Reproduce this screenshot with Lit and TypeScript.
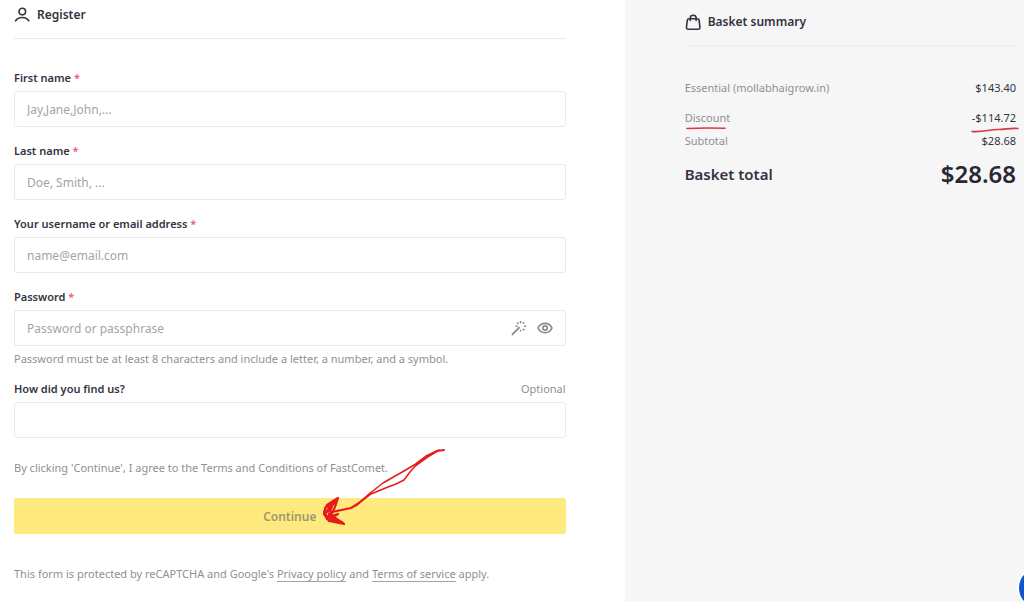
import { LitElement, html, css, svg, nothing } from "lit";
import { customElement, state } from "lit/decorators.js";

interface Field {
  id: string;
  label: string;
  type: string;
  placeholder: string;
}

interface BasketRow {
  label: string;
  amount: string;
  marked?: boolean;
}

const FIELDS: Field[] = [
  { id: "first-name", label: "First name", type: "text", placeholder: "Jay,Jane,John,..." },
  { id: "last-name", label: "Last name", type: "text", placeholder: "Doe, Smith, ..." },
  { id: "email", label: "Your username or email address", type: "email", placeholder: "name@email.com" },
];

const ROWS: BasketRow[] = [
  { label: "Discount", amount: "-$114.72", marked: true },
  { label: "Subtotal", amount: "$28.68" },
];

const userIcon = html`<svg class="icon" viewBox="0 0 16 16" aria-hidden="true">
  ${svg`<circle cx="8.3" cy="4.6" r="3.3"/><path d="M1.6 13.800C3 11.600 5.300 10.500 8.200 10.500s5.300 1.100 6.600 3.300"/>`}
</svg>`;

const bagIcon = html`<svg class="icon" viewBox="0 0 16 16" aria-hidden="true">
  ${svg`<path d="M4 4.800H12.400Q13.900 4.800 14.100 6.300L14.900 13Q15.100 15.200 13 15.200H3.400Q1.300 15.200 1.500 13L2.300 6.300Q2.500 4.800 4 4.800Z"/><path d="M5.300 6.500V3.800Q5.300 1.200 8.200 1.200T11.100 3.800V6.500"/>`}
</svg>`;

const wandIcon = html`<svg class="tool-icon" viewBox="0 0 16 16" aria-hidden="true">
  ${svg`<path d="M1 14.800L8.600 7.200" stroke-width="1.900"/>
  <path d="M9.600 1V3.200M9.600 9.700V11.500M13.200 2.400L12 3.700M6 2.600L7.300 3.900M13.200 6.200H15.300M4.500 6.200H6.600M12 8.900L13.400 10.300" stroke-width="1.600"/>`}
</svg>`;

const eyeIcon = html`<svg class="tool-icon" viewBox="0 0 16 16" aria-hidden="true">
  ${svg`<path d="M1 8C2.400 4.900 5 3.300 8 3.300S13.600 4.900 15 8C13.600 11.100 11 12.700 8 12.700S2.400 11.100 1 8Z" stroke-width="1.700"/><circle cx="8" cy="8" r="2.200" stroke-width="1.700"/>`}
</svg>`;

@customElement("app-root")
export class AppRoot extends LitElement {
  @state() private passwordVisible = false;

  static styles = css`
    :host {
      display: block;
      min-height: 100vh;
      overflow: hidden;
      background: #ffffff;
      color: #33343f;
      font-family: "Segoe UI", "Noto Sans", "Open Sans", sans-serif;
      font-size: 12px;
      line-height: 18px;
    }
    * {
      box-sizing: border-box;
    }
    .page {
      display: grid;
      grid-template-columns: 61fr 39fr;
      min-height: 100vh;
    }
    .register {
      padding: 5px 59px 19px 14px;
    }
    .basket {
      padding: 12px 8px 24px 60px;
      background: #f6f6f6;
    }
    .heading {
      display: flex;
      align-items: center;
      gap: 7px;
      margin: 0 0 30px;
      padding-bottom: 13px;
      border-bottom: 1px solid #eaebed;
      font-size: 12px;
      font-weight: 600;
      line-height: 20px;
    }
    .icon {
      width: 16px;
      height: 16px;
      fill: none;
      stroke: #33343f;
      stroke-width: 1.6;
      stroke-linecap: round;
      stroke-linejoin: round;
    }
    .fields {
      display: grid;
      gap: 15px;
    }
    .field {
      display: grid;
      gap: 4px;
    }
    .source {
      margin-top: 12px;
    }
    .label-row {
      display: flex;
      justify-content: space-between;
    }
    label {
      font-size: 11px;
      font-weight: 600;
    }
    .required {
      color: #ee5b78;
    }
    .note {
      margin: 0;
      color: #8f9093;
      font-size: 11px;
    }
    .box {
      display: flex;
      align-items: center;
      height: 36px;
      padding: 0 12px;
      border: 1px solid #e8e9eb;
      border-radius: 3px;
      background: #ffffff;
    }
    .box:focus-within {
      border-color: #b9bbc1;
    }
    .input {
      flex: 1;
      min-width: 0;
      padding: 2px 0 0;
      border: 0;
      outline: 0;
      background: none;
      color: #33343f;
      font: inherit;
    }
    .input::placeholder {
      color: #a3a4a7;
      opacity: 1;
    }
    .tools {
      display: flex;
      gap: 10px;
    }
    .tool {
      display: flex;
      padding: 0;
      border: 0;
      background: none;
      cursor: pointer;
    }
    .tool-icon {
      width: 16px;
      height: 16px;
      fill: none;
      stroke: #8a8b8e;
    }
    .terms {
      margin: 21px 0;
    }
    .submit {
      position: relative;
    }
    .continue {
      display: block;
      width: 100%;
      height: 36px;
      padding: 2px 0 0;
      border: 0;
      border-radius: 3px;
      background: #feea7e;
      color: #a09770;
      font: inherit;
      font-weight: 600;
      cursor: pointer;
    }
    .ink {
      position: absolute;
      overflow: visible;
      fill: none;
      stroke: #e51c1a;
      stroke-linecap: round;
      stroke-linejoin: round;
      pointer-events: none;
    }
    .arrow {
      left: calc(50% + 30px);
      bottom: 0;
      width: 130px;
      height: 90px;
    }
    .legal {
      margin-top: 31px;
    }
    .link {
      border-bottom: 1px solid #a3a4a7;
      color: inherit;
      text-decoration: none;
    }
    .basket .heading {
      margin-bottom: 33px;
    }
    .rows {
      display: grid;
      gap: 5px;
      margin: 0;
      font-size: 11px;
    }
    .row {
      display: flex;
      justify-content: space-between;
      align-items: center;
    }
    .product {
      margin-bottom: 7px;
    }
    .name,
    .amount {
      position: relative;
      margin: 0;
    }
    .name {
      color: #8f9093;
    }
    .underline {
      left: 0;
      top: 0;
      width: 100%;
      height: 100%;
      stroke: #dc3545;
      stroke-width: 1.6;
    }
    .total {
      margin-top: 4px;
      line-height: 30px;
      font-weight: 600;
    }
    .total .name {
      color: #33343f;
      font-size: 15px;
    }
    .total .amount {
      color: #272833;
      font-size: 24px;
    }
    .chat {
      position: fixed;
      right: -35px;
      bottom: -6px;
      width: 40px;
      height: 40px;
      padding: 0;
      border: 0;
      border-radius: 50%;
      background: #0f55cf;
      box-shadow: 0 0 0 2px #ffffff;
      cursor: pointer;
    }
  `;

  private togglePassword() {
    this.passwordVisible = !this.passwordVisible;
  }

  private renderLabel(id: string, text: string) {
    return html`<label for=${id}>${text} <span class="required">*</span></label>`;
  }

  private renderField(f: Field) {
    return html`<div class="field">
      ${this.renderLabel(f.id, f.label)}
      <div class="box">
        <input class="input" id=${f.id} type=${f.type} placeholder=${f.placeholder} required />
      </div>
    </div>`;
  }

  private renderRow(r: BasketRow) {
    return html`<div class="row">
      <dt class="name">
        ${r.label}${r.marked
          ? html`<svg class="ink underline" aria-hidden="true"><path d="M2 19.500Q20 18.500 40 19.300" /></svg>`
          : nothing}
      </dt>
      <dd class="amount">
        ${r.amount}${r.marked
          ? html`<svg class="ink underline" aria-hidden="true">
              <path d="M0 22.500C10 23.500 18 20.500 26 20.500S38 18.800 46 19.500" />
            </svg>`
          : nothing}
      </dd>
    </div>`;
  }

  render() {
    return html`
      <div class="page">
        <main class="register">
          <h2 class="heading">${userIcon}Register</h2>
          <form @submit=${(e: Event) => e.preventDefault()}>
            <div class="fields">
              ${FIELDS.map((f) => this.renderField(f))}
              <div class="field">
                ${this.renderLabel("password", "Password")}
                <div class="box">
                  <input
                    class="input"
                    id="password"
                    type=${this.passwordVisible ? "text" : "password"}
                    placeholder="Password or passphrase"
                    aria-describedby="password-note"
                    required
                  />
                  <div class="tools">
                    <button class="tool" type="button" aria-label="Generate password">${wandIcon}</button>
                    <button class="tool" type="button" aria-label="Show password" @click=${this.togglePassword}>
                      ${eyeIcon}
                    </button>
                  </div>
                </div>
                <p class="note" id="password-note">
                  Password must be at least 8 characters and include a letter, a number, and a symbol.
                </p>
              </div>
            </div>
            <div class="field source">
              <div class="label-row">
                <label for="source">How did you find us?</label>
                <span class="note">Optional</span>
              </div>
              <div class="box"><input class="input" id="source" type="text" /></div>
            </div>
            <p class="note terms">
              By clicking 'Continue', I agree to the Terms and Conditions of FastComet.
            </p>
            <div class="submit">
              <button class="continue" type="submit">Continue</button>
              <svg class="ink arrow" viewBox="0 0 130 90" aria-hidden="true">
                <path stroke-width="2.200" d="M124 6L117 7L107 13L96 21" />
                <path
                  stroke-width="1.500"
                  d="M119 6L106 12L94 21L84 27L63 39L49 50L39 59M97 20L90 28L84 36L76 40L68 43L51 50L42 56L36 62"
                />
                <path stroke-width="2.200" d="M49 51L39 59L31 64L12 68" />
                <path
                  stroke-width="2.200"
                  d="M18 54L7 61L4 68L7 75L24 80L11 71L15 63L18 54L9 66L13 57L6 69L12 62L8 73L18 70L10 75L22 78L6 72L5 64L17 55M24 80L9 77L4 70"
                />
              </svg>
            </div>
            <p class="note legal">
              This form is protected by reCAPTCHA and Google's
              <a class="link" href="#privacy">Privacy policy</a> and
              <a class="link" href="#terms">Terms of service</a> apply.
            </p>
          </form>
        </main>
        <aside class="basket">
          <h2 class="heading">${bagIcon}Basket summary</h2>
          <dl class="rows">
            <div class="row product">
              <dt class="name">Essential (mollabhaigrow.in)</dt>
              <dd class="amount">$143.40</dd>
            </div>
            ${ROWS.map((r) => this.renderRow(r))}
            <div class="row total">
              <dt class="name">Basket total</dt>
              <dd class="amount">$28.68</dd>
            </div>
          </dl>
        </aside>
      </div>
      <button class="chat" type="button" aria-label="Open chat"></button>
    `;
  }
}
